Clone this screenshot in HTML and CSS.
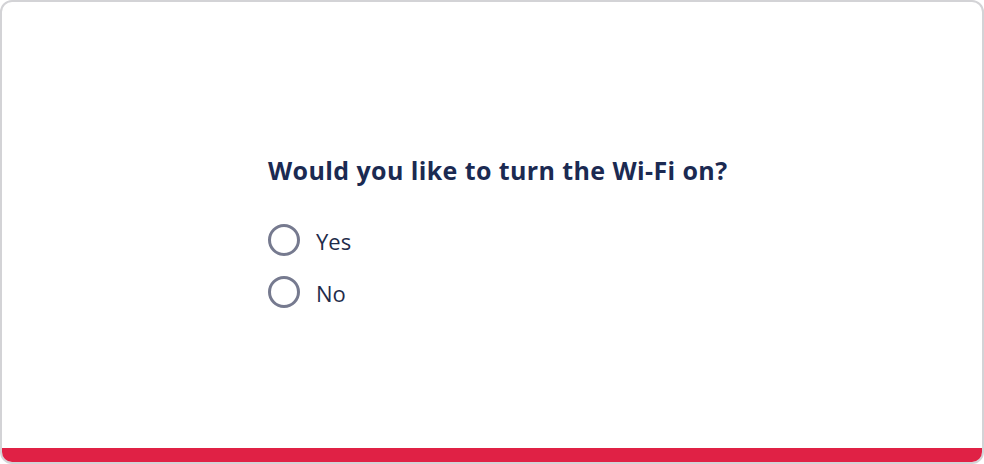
FILE: index.html
```html
<!DOCTYPE html>
<html>
<head>
<meta charset="utf-8">
<link rel="stylesheet" href="styles.css">
</head>
<body>
<div class="card">
  <div class="content">
    <fieldset class="group">
      <legend class="question">Would you like to turn the Wi-Fi on?</legend>
      <label class="option"><span class="radio"></span><span class="label">Yes</span></label>
      <label class="option"><span class="radio"></span><span class="label">No</span></label>
    </fieldset>
  </div>
  <div class="accent"></div>
</div>
</body>
</html>
```
FILE: styles.css
```css
* { box-sizing: border-box; }
html, body { margin: 0; padding: 0; background: #fff; }
.card {
  width: 984px;
  height: 464px;
  border: 2px solid #d3d3d6;
  border-radius: 12px;
  overflow: hidden;
  display: flex;
  flex-direction: column;
  background: #fff;
}
.content {
  flex: 1;
  padding-top: 152px;
  display: flex;
  justify-content: center;
}
.group {
  border: 0;
  margin: 0;
  padding: 0;
  width: 448px;
  min-width: 0;
  display: flex;
  flex-direction: column;
  gap: 20px;
}
.question {
  padding: 0;
  margin: 0 0 18px 0;
  float: left;
  width: 100%;
  white-space: nowrap;
  font-family: "Open Sans", "Noto Sans", sans-serif;
  font-weight: 700;
  font-size: 25px;
  line-height: 32px;
  letter-spacing: 0.4px;
  color: #1b2a52;
}
.option {
  display: flex;
  align-items: center;
  gap: 16px;
  height: 32px;
}
.radio {
  width: 32px;
  height: 32px;
  border: 3px solid #767a8f;
  border-radius: 50%;
  flex: none;
}
.label {
  font-family: "Open Sans", "Noto Sans", sans-serif;
  font-size: 22px;
  color: #1f2b4a;
  padding-top: 2px;
}
.accent {
  height: 14px;
  background: #e02145;
  flex: none;
}
```
